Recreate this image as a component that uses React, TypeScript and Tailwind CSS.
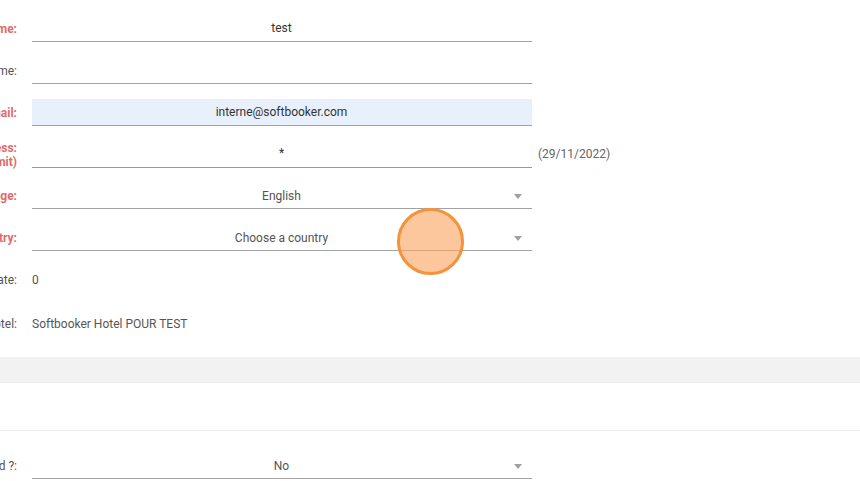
const font = { fontFamily: "Roboto, sans-serif" };

function Label({ text, red }: { text: React.ReactNode; red?: boolean }) {
  return (
    <div
      className={`w-[17px] shrink-0 flex justify-end whitespace-nowrap text-right text-[12px] leading-[14px] ${
        red ? "text-[#e26a6a] font-bold" : "text-[#555555]"
      }`}
    >
      <div>{text}</div>
    </div>
  );
}

function Field({
  label,
  value,
  red,
  select,
  className = "",
  inputClass = "border-b border-b-[#a3a3a3]",
  dark,
  lift,
}: {
  label: React.ReactNode;
  value?: string;
  red?: boolean;
  select?: boolean;
  className?: string;
  inputClass?: string;
  dark?: boolean;
  lift?: boolean;
}) {
  return (
    <div className={`flex items-center h-[27px] ${className}`}>
      <Label text={label} red={red} />
      <div
        className={`relative ml-[15px] w-[500px] h-[27px] flex items-center justify-center pr-[1px] text-[12px] ${
          dark ? "text-[#333333]" : "text-[#555555]"
        } ${select ? "pt-[2px]" : ""} ${inputClass}`}
      >
        <span className={lift ? "-mt-[2px]" : ""}>{value}</span>
        {select && (
          <svg className="absolute right-[10px] top-[12px]" width="8" height="5" viewBox="0 0 8 5">
            <path d="M0 0H8L4 5Z" fill="#a0a0a0" />
          </svg>
        )}
      </div>
    </div>
  );
}

export default function App() {
  return (
    <div className="relative w-[860px] h-[481px] overflow-hidden bg-white" style={font}>
      <div className="pt-[15px] flex flex-col">
        <Field label="Name:" value="test" red dark />
        <Field label="Surname:" className="mt-[15px]" />
        <Field
          label="Email:"
          value="interne@softbooker.com"
          red
          dark
          className="mt-[15px]"
          inputClass="border-b border-b-[#a3a3a3] bg-[#e8f0fb]"
        />
        <div className="flex items-center mt-[15px] h-[27px]">
          <Field
            label={
              <>
                Access:
                <br />
                (limit)
              </>
            }
            value="*"
            red
            dark
            lift
            inputClass="border-b-[1px] border-solid border-[#3cc0bc]"
          />
          <div className="ml-[6px] mb-[2px] text-[12px] text-[#666666]">(29/11/2022)</div>
        </div>
        <Field label="Language:" value="English" red select className="mt-[14px]" />
        <Field label="Country:" value="Choose a country" red select className="mt-[15px]" />
        <div className="flex items-center mt-[22px] h-[14px]">
          <Label text="Rate:" />
          <div className="ml-[15px] text-[12px] text-[#555555]">0</div>
        </div>
        <div className="flex items-center mt-[30px] h-[14px]">
          <Label text="Hotel:" />
          <div className="ml-[15px] text-[12px] text-[#555555]">Softbooker Hotel POUR TEST</div>
        </div>
        <div className="mt-[26px] h-[26px] bg-[#f2f2f2] border-b border-[#ececec]" />
        <div className="mt-[47px] h-px bg-[#ececec]" />
        <Field label="Required ?:" value="No" select className="mt-[21px]" />
      </div>
      <div className="absolute left-[397px] top-[208px] w-[67px] h-[67px] rounded-full border-[3px] border-[#f3933c] bg-[#fba25c]/60" />
    </div>
  );
}
